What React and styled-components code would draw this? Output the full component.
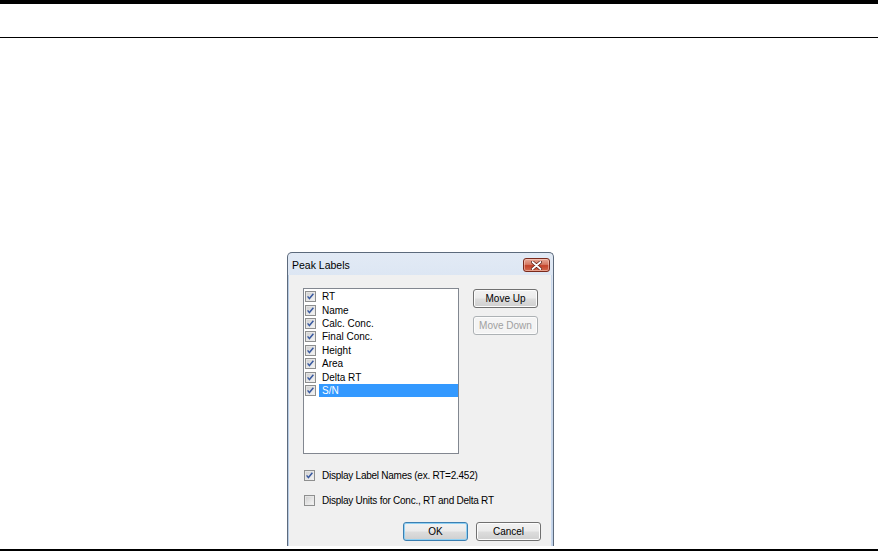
import React from 'react';
import styled, { createGlobalStyle } from 'styled-components';

const GlobalStyle = createGlobalStyle`
  html, body {
    margin: 0;
    padding: 0;
    background: #ffffff;
  }
  body {
    font-family: "Liberation Sans", Arial, sans-serif;
  }
`;

const Page = styled.div`
  width: 878px;
  height: 552px;
  display: flex;
  flex-direction: column;
  overflow: hidden;
`;

const TopBand = styled.div`
  height: 4px;
  background: #000000;
`;

const Rule = styled.div`
  height: ${props => props.thick}px;
  margin-top: ${props => props.gap}px;
  background: #000000;
`;

const Stage = styled.div`
  padding-top: 214px;
  padding-left: 287px;
`;

const Dialog = styled.div`
  width: 267px;
  height: 294px;
  box-sizing: border-box;
  display: flex;
  flex-direction: column;
  border: 1px solid #5c6a7c;
  border-bottom: none;
  border-radius: 5px 5px 0 0;
  background: linear-gradient(to bottom, #e2eaf5 0%, #cad9ed 35%, #bfd1e9 100%);
  overflow: hidden;
`;

const TitleBar = styled.div`
  height: 22px;
  flex: none;
  display: flex;
  align-items: center;
  justify-content: space-between;
  padding: 0 3px 0 4px;
`;

const Title = styled.span`
  font-size: 10.5px;
  color: #000000;
  margin-top: 2px;
`;

const CloseButton = styled.div`
  width: 27px;
  height: 14px;
  box-sizing: border-box;
  margin-top: 2px;
  border: 1px solid #7a2a1c;
  border-radius: 3px;
  background: linear-gradient(to bottom, #e9a897 0%, #d67a63 45%, #c4432a 55%, #d26a4e 100%);
  display: flex;
  align-items: center;
  justify-content: center;
  box-shadow: inset 0 0 0 1px rgba(255, 220, 210, 0.5);
`;

const Client = styled.div`
  flex: 1;
  margin: 0 1px 0 0;
  background: #f0f0f0;
  border-left: 1px solid #b8cce4;
  border-right: 1px solid #c9d8ec;
  padding: 13px 10px 0 14px;
  display: flex;
  flex-direction: column;
`;

const TopRow = styled.div`
  display: flex;
  gap: 14px;
`;

const ListBox = styled.div`
  width: 156px;
  height: 166px;
  box-sizing: border-box;
  border: 1px solid #828790;
  background: #ffffff;
  padding: 1px 0 0 1px;
`;

const ListRow = styled.div`
  height: 13.43px;
  display: flex;
  align-items: center;
  font-size: 10px;
`;

const ItemLabel = styled.span`
  flex: 1;
  height: 13px;
  line-height: 13px;
  margin-left: 3px;
  padding-left: 3px;
  background: ${props => (props.selected ? '#3399ff' : 'transparent')};
  color: ${props => (props.selected ? '#ffffff' : '#000000')};
`;

const ButtonColumn = styled.div`
  display: flex;
  flex-direction: column;
  gap: 8px;
  padding-top: 1px;
`;

const Button = styled.div`
  width: 65px;
  height: 19px;
  box-sizing: border-box;
  display: flex;
  align-items: center;
  justify-content: center;
  font-size: 10px;
  border-radius: 3px;
  border: 1px solid ${props => (props.disabled ? '#adb2b5' : props.primary ? '#3c7fb1' : '#707070')};
  color: ${props => (props.disabled ? '#a0a0a0' : '#000000')};
  background: ${props =>
    props.disabled
      ? '#f4f4f4'
      : 'linear-gradient(to bottom, #f2f2f2 0%, #ebebeb 48%, #dddddd 52%, #cfcfcf 100%)'};
  box-shadow: ${props => (props.primary ? 'inset 0 0 0 1px #8fd0f3' : 'inset 0 0 0 1px #fcfcfc')};
`;

const OptionRow = styled.div`
  display: flex;
  align-items: center;
  gap: 7px;
  height: 14px;
  margin-top: ${props => props.gap}px;
  padding-left: 1px;
  font-size: 10px;
  letter-spacing: -0.25px;
  color: #000000;
`;

const ButtonRow = styled.div`
  display: flex;
  justify-content: flex-end;
  gap: 8px;
  margin-top: 15px;
`;

const CheckBox = ({ checked }) => (
  <svg width="11" height="11" viewBox="0 0 11 11" style={{ flex: 'none' }}>
    <defs>
      <linearGradient id="cbfill" x1="0" y1="0" x2="1" y2="1">
        <stop offset="0" stopColor="#cfcfcf" />
        <stop offset="1" stopColor="#f6f6f6" />
      </linearGradient>
    </defs>
    <rect x="0.5" y="0.5" width="10" height="10" fill="#ffffff" stroke="#8e8f8f" />
    <rect x="1.5" y="1.5" width="8" height="8" fill="url(#cbfill)" stroke="#e2e2e2" strokeWidth="0.6" />
    {checked && (
      <path d="M2.6 5.4 L4.4 7.6 L8.4 2.8" fill="none" stroke="#3a5aa0" strokeWidth="1.5" />
    )}
  </svg>
);

const CloseGlyph = () => (
  <svg width="11" height="9" viewBox="0 0 11 9">
    <path d="M1.5 1 L9.5 8 M9.5 1 L1.5 8" stroke="#5a1a10" strokeWidth="3.2" strokeLinecap="round" />
    <path d="M1.5 1 L9.5 8 M9.5 1 L1.5 8" stroke="#ffffff" strokeWidth="1.8" strokeLinecap="round" />
  </svg>
);

const items = ['RT', 'Name', 'Calc. Conc.', 'Final Conc.', 'Height', 'Area', 'Delta RT', 'S/N'];

const App = () => (
  <>
    <GlobalStyle />
    <Page>
      <TopBand />
      <Rule gap={33} thick={1} />
      <Stage>
        <Dialog>
          <TitleBar>
            <Title>Peak Labels</Title>
            <CloseButton>
              <CloseGlyph />
            </CloseButton>
          </TitleBar>
          <Client>
            <TopRow>
              <ListBox>
                {items.map((item, idx) => (
                  <ListRow key={item}>
                    <CheckBox checked />
                    <ItemLabel selected={idx === items.length - 1}>{item}</ItemLabel>
                  </ListRow>
                ))}
              </ListBox>
              <ButtonColumn>
                <Button>Move Up</Button>
                <Button disabled>Move Down</Button>
              </ButtonColumn>
            </TopRow>
            <OptionRow gap={14}>
              <CheckBox checked />
              Display Label Names (ex. RT=2.452)
            </OptionRow>
            <OptionRow gap={11}>
              <CheckBox />
              Display Units for Conc., RT and Delta RT
            </OptionRow>
            <ButtonRow>
              <Button primary>OK</Button>
              <Button>Cancel</Button>
            </ButtonRow>
          </Client>
        </Dialog>
      </Stage>
      <Rule gap={3} thick={2} />
    </Page>
  </>
);

export default App;
